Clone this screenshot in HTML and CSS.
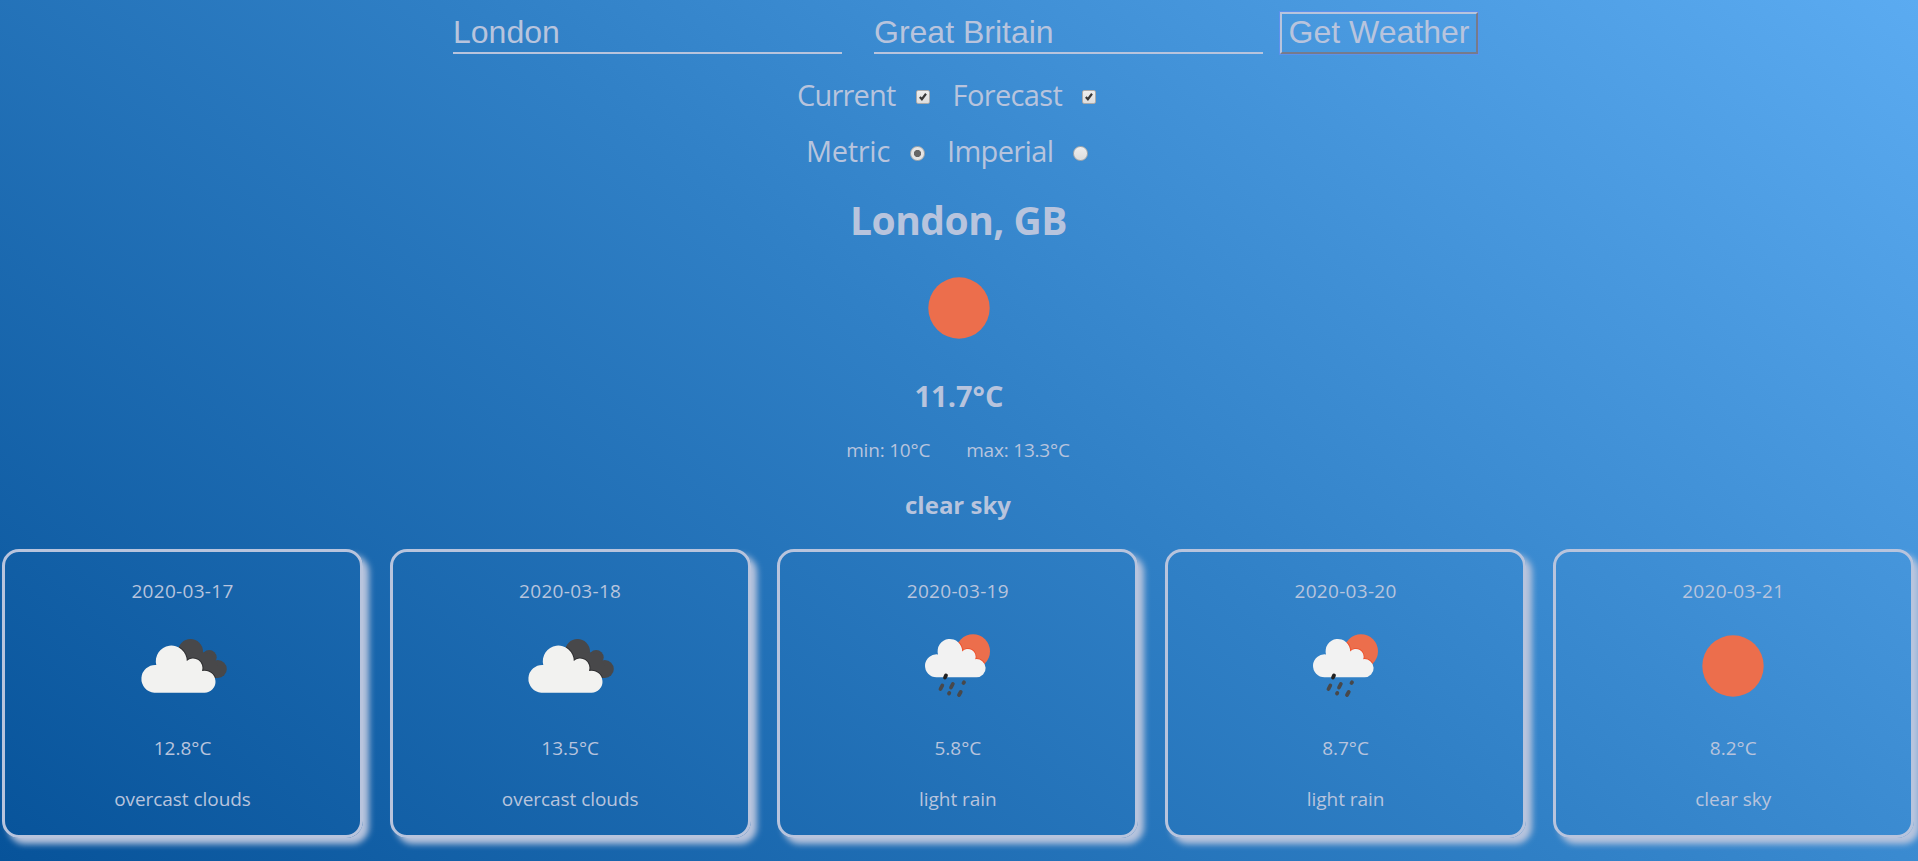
FILE: index.html
```html
<!DOCTYPE html>
<html lang="en">
<head>
<meta charset="utf-8">
<title>Weather</title>
<link rel="stylesheet" href="styles.css">
</head>
<body>
<svg class="defs" aria-hidden="true">
  <clipPath id="dark-area"><circle cx="57.5" cy="35.5" r="12.5"/><circle cx="76.2" cy="41.5" r="7.5"/><circle cx="84.8" cy="53" r="9"/><path d="M50 38L68 36L78 38L88 56L84.8 62L56 60Z"/></clipPath>
  <clipPath id="sun-area"><circle cx="65" cy="35.3" r="17"/></clipPath>
  <symbol id="sun" viewBox="0 0 100 100"><circle cx="50" cy="50" r="30.7" fill="#ec6e4c"/></symbol>
  <symbol id="clouds" viewBox="0 0 100 100">
    <g fill="#48484a"><circle cx="57.5" cy="35.5" r="12.5"/><circle cx="76.2" cy="41.5" r="7.5"/><circle cx="84.8" cy="53" r="9"/><path d="M50 38L68 36L78 38L88 56L84.8 62L56 60Z"/></g>
    <path class="edge-dark" clip-path="url(#dark-area)" d="M21.3 76.7A13.8 13.8 0 1 1 23.3 49A15.5 15.5 0 1 1 53.8 45A9.4 9.4 0 0 1 69 55A11 11 0 1 1 71 76.7Z"/>
    <path fill="#f2f2f0" d="M21.3 76.7A13.8 13.8 0 1 1 23.3 49A15.5 15.5 0 1 1 53.8 45A9.4 9.4 0 0 1 69 55A11 11 0 1 1 71 76.7Z"/>
  </symbol>
  <symbol id="rain" viewBox="0 0 100 100">
    <circle cx="65" cy="35.3" r="17" fill="#ec6e4c"/>
    <path class="edge-red" clip-path="url(#sun-area)" d="M28.6 61.3A11.5 11.5 0 1 1 30 38.4A12.3 12.3 0 1 1 54.2 35.5A7.7 7.7 0 0 1 67.2 43.2A9.1 9.1 0 1 1 68.3 61.3Z"/>
    <path fill="#f2f2f2" d="M28.6 61.3A11.5 11.5 0 1 1 30 38.4A12.3 12.3 0 1 1 54.2 35.5A7.7 7.7 0 0 1 67.2 43.2A9.1 9.1 0 1 1 68.3 61.3Z"/>
    <g fill="none" stroke="#48484a" stroke-width="3.8" stroke-linecap="round"><path stroke="#222" d="M38 59.4L37 61.5"/><path d="M34.3 69.5L32.5 73M44.8 68L43 71.5M56 66.3L55.5 67M41.3 77L41 77.5M52.7 76L51 79"/></g>
  </symbol>
</svg>
<form class="search">
  <input class="field" type="text" value="London" aria-label="City">
  <input class="field" type="text" value="Great Britain" aria-label="Country">
  <button class="submit" type="button">Get Weather</button>
</form>
<div class="options options-view">
  <label class="view">Current</label><span class="check"><svg viewBox="0 0 14 14"><path d="M3.3 7L5.7 9.6L10.5 3.2"/></svg></span>
  <label>Forecast</label><span class="check"><svg viewBox="0 0 14 14"><path d="M3.3 7L5.7 9.6L10.5 3.2"/></svg></span>
</div>
<div class="options options-units">
  <label class="metric">Metric</label><span class="radio selected"></span>
  <label>Imperial</label><span class="radio"></span>
</div>
<main class="current">
  <h1>London, GB</h1>
  <svg class="icon"><use href="#sun"/></svg>
  <h2>11.7°C</h2>
  <div class="range"><span>min: 10°C</span><span>max: 13.3°C</span></div>
  <h3>clear sky</h3>
</main>
<section class="forecast">
  <article class="day"><p class="date">2020-03-17</p><svg class="icon"><use href="#clouds"/></svg><p class="temp">12.8°C</p><p class="desc">overcast clouds</p></article>
  <article class="day"><p class="date">2020-03-18</p><svg class="icon"><use href="#clouds"/></svg><p class="temp">13.5°C</p><p class="desc">overcast clouds</p></article>
  <article class="day"><p class="date">2020-03-19</p><svg class="icon"><use href="#rain"/></svg><p class="temp">5.8°C</p><p class="desc">light rain</p></article>
  <article class="day"><p class="date">2020-03-20</p><svg class="icon"><use href="#rain"/></svg><p class="temp">8.7°C</p><p class="desc">light rain</p></article>
  <article class="day"><p class="date">2020-03-21</p><svg class="icon"><use href="#sun"/></svg><p class="temp">8.2°C</p><p class="desc">clear sky</p></article>
</section>
</body>
</html>
```
FILE: styles.css
```css
* { box-sizing: border-box; }
body {
  margin: 0;
  height: 861px;
  overflow: hidden;
  display: flex;
  flex-direction: column;
  color: #b8c4dd;
  font-family: "Open Sans", "Noto Sans", sans-serif;
  background: linear-gradient(38deg, #07539a, #3080c6 52%, #5babf1);
}
.defs { width: 0; height: 0; display: block; position: absolute; }
.search { display: flex; height: 54px; padding: 12px 0 0 453px; flex: none; }
.field {
  width: 389px; height: 42px; margin: 0 32px 0 0; padding: 1px 0 0;
  border: 0; border-bottom: 2px solid #b8c4dd; background: transparent;
  color: inherit; font: 32px "Liberation Sans", sans-serif; outline: 0;
}
.field + .field { margin-right: 17px; }
.submit {
  width: 198px; height: 42px; padding: 0 0 2px; background: transparent; color: inherit;
  border: 2px solid; border-color: #b8c4dd #767b8b #767b8b #b8c4dd;
  outline: 1px solid #5b91ef; font: 32px/36px "Liberation Sans", sans-serif; white-space: nowrap;
}
.options { display: flex; align-items: center; flex: none; height: 56px; font-size: 29px; line-height: 40px; }
.options-view { margin-top: 13px; padding-left: 797px; }
.options-units { padding-left: 806px; }
label { display: block; white-space: nowrap; letter-spacing: -0.65px; }
.view { letter-spacing: -0.8px; }
.metric { letter-spacing: -0.3px; }
.check { display: block; width: 14px; height: 14px; margin: 3px 23px 0 20px; border: 1px solid #aaa; border-radius: 2px; background: linear-gradient(#eee, #ddd); }
.check svg { display: block; width: 12px; height: 12px; fill: none; stroke: #383838; stroke-width: 2.5; }
.radio { display: block; width: 15px; height: 15px; margin: 4px 22px 0 20px; border: 1px solid #aaa; border-radius: 50%; background: linear-gradient(#eee, #ddd); }
.radio.selected { background: radial-gradient(circle, #666 0 3.2px, #e4e4e4 4px); }
.current { display: flex; flex-direction: column; align-items: center; flex: none; height: 370px; }
h1, h2, h3, p { margin: 0; }
h1 { height: 56px; margin-top: 13px; font-size: 39px; line-height: 56px; letter-spacing: -0.5px; margin-right: 1px; }
.icon { display: block; width: 100px; height: 100px; }
.current .icon { margin-top: 10px; }
h2 { margin-top: 18px; font-size: 29px; line-height: 40px; }
.range { display: flex; gap: 36px; margin: 20px 2px 0 0; font-size: 19px; line-height: 28px; letter-spacing: -0.2px; }
h3 { margin: 24px 2px 0 0; font-size: 24px; line-height: 34px; }
.forecast { display: grid; grid-template-columns: repeat(5, 361px); column-gap: 26.7px; padding-left: 2px; flex: none; }
.day {
  display: flex; flex-direction: column; align-items: center; height: 289px;
  border: 3px solid #b8c4dd; border-radius: 17px; box-shadow: 6px 6px 6px #b8c4dd;
  padding-top: 25px; font-size: 19px; line-height: 28px;
}
.date { letter-spacing: 0.3px; }
.day .icon { margin-top: 11px; }
.temp { margin-top: 18px; }
.desc { margin-top: 23px; letter-spacing: -0.05px; }
.edge-dark { fill: none; stroke: #303032; stroke-width: 2; }
.edge-red { fill: none; stroke: #ee4d28; stroke-width: 1.5; }
```
